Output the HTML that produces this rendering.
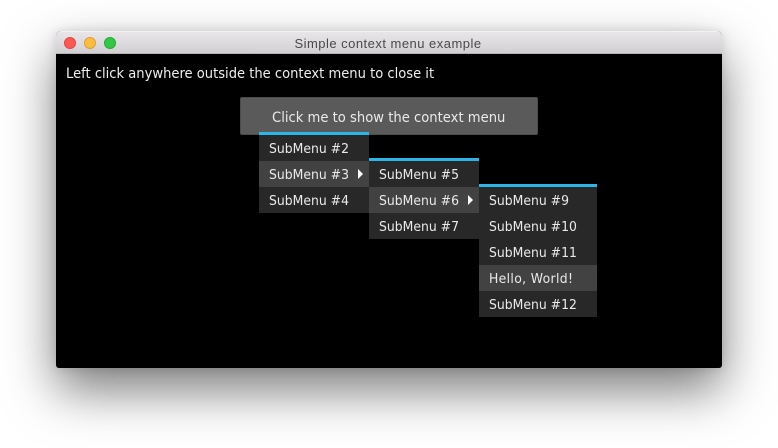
<!DOCTYPE html>
<html>
<head>
<meta charset="utf-8">
<style>
html,body{margin:0;padding:0;background:#fff;width:778px;height:448px;overflow:hidden}
body{position:relative;font-family:"DejaVu Sans",sans-serif;font-size:14px;color:#eee}
.win{position:absolute;left:56px;top:31px;width:666px;height:337px;border-radius:5px 5px 3px 3px;background:#000;box-shadow:0 22px 50px rgba(0,0,0,.52),0 0 10px rgba(0,0,0,.12)}
.bar{position:absolute;left:0;top:0;width:666px;height:23px;box-sizing:border-box;border-top:1px solid #f3f1f3;border-radius:5px 5px 0 0;background:linear-gradient(#e9e6e9,#d2d0d2);border-bottom:1px solid #b4b2b4;text-align:center;color:#4a4a4a;font:13px/23px "Liberation Sans",sans-serif;letter-spacing:.48px;text-indent:-2px}
.dot{position:absolute;top:37px;width:12px;height:12px;box-sizing:border-box;border-radius:50%;border:1px solid}
.t{position:absolute;white-space:nowrap;line-height:20px;transform-origin:0 50%;transform:scaleX(.936)}
.btn{position:absolute;left:240px;top:97px;width:298px;height:38px;box-sizing:border-box;background:#5a5a5a;border:1px solid #4c4c4c;border-radius:2px}
.btn span{position:absolute;left:31px;top:10px;line-height:20px;white-space:nowrap;transform-origin:0 50%;transform:scaleX(.94);color:#eaeaea}
.menu{position:absolute;background:#282828;border-top:3px solid #2db5e8}
.it{height:26px;position:relative}
.it b{position:absolute;left:10px;top:5px;line-height:20px;font-weight:normal;font-size:13px;white-space:nowrap;transform-origin:0 50%;transform:scaleX(.955);color:#eaeaea}
.hi{background:#424242}
.ar{position:absolute;right:6px;top:8px;width:0;height:0;border-left:5px solid #fff;border-top:5px solid transparent;border-bottom:5px solid transparent}
</style>
</head>
<body>
<div class="win"><div class="bar">Simple context menu example</div></div>
<div class="dot" style="left:64px;background:#fc5753;border-color:#df4744"></div>
<div class="dot" style="left:84px;background:#fdbc40;border-color:#de9f34"></div>
<div class="dot" style="left:104px;background:#33c748;border-color:#27aa35"></div>
<div class="t" style="left:66px;top:64px">Left click anywhere outside the context menu to close it</div>
<div class="btn"><span>Click me to show the context menu</span></div>
<div class="menu" style="left:259px;top:132px;width:110px">
<div class="it"><b>SubMenu #2</b></div>
<div class="it hi"><b>SubMenu #3</b><span class="ar"></span></div>
<div class="it"><b>SubMenu #4</b></div>
</div>
<div class="menu" style="left:369px;top:158px;width:110px">
<div class="it"><b>SubMenu #5</b></div>
<div class="it hi"><b>SubMenu #6</b><span class="ar"></span></div>
<div class="it"><b>SubMenu #7</b></div>
</div>
<div class="menu" style="left:479px;top:184px;width:118px">
<div class="it"><b>SubMenu #9</b></div>
<div class="it"><b>SubMenu #10</b></div>
<div class="it"><b>SubMenu #11</b></div>
<div class="it hi"><b style="letter-spacing:.35px">Hello, World!</b></div>
<div class="it"><b>SubMenu #12</b></div>
</div>
</body>
</html>
